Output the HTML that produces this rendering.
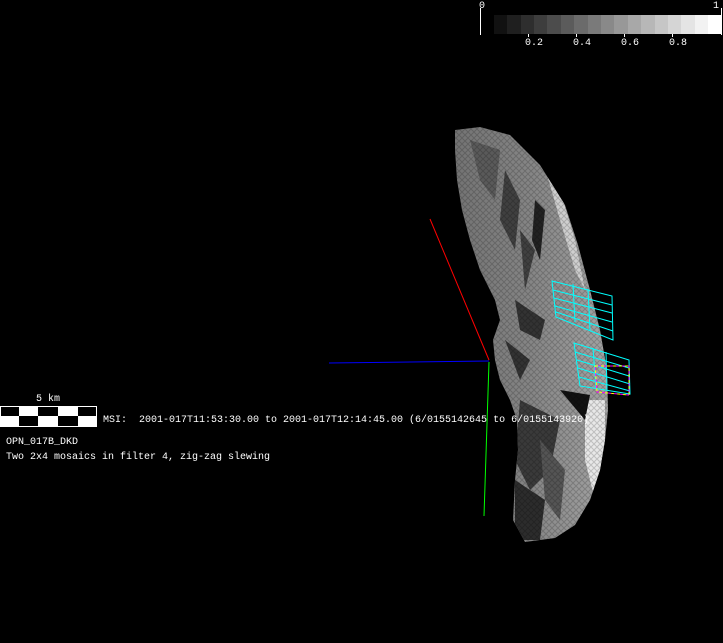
<!DOCTYPE html>
<html><head><style>
html,body{margin:0;padding:0;background:#000;}
body{width:723px;height:643px;overflow:hidden;position:relative;font-family:"Liberation Mono","DejaVu Sans Mono",monospace;font-size:10px;color:#fff;}
.t{position:absolute;white-space:pre;line-height:11px;}
</style></head><body>
<svg width="723" height="643" style="position:absolute;left:0;top:0" xmlns="http://www.w3.org/2000/svg">
<defs>
<linearGradient id="g" x1="0" y1="0" x2="1" y2="0">
<stop offset="0" stop-color="#707070"/><stop offset="0.5" stop-color="#858585"/><stop offset="1" stop-color="#a8a8a8"/>
</linearGradient>
<pattern id="p" width="6" height="6" patternUnits="userSpaceOnUse">
<path d="M0 0L6 6M6 0L0 6" stroke="#000" stroke-opacity="0.18" stroke-width="1"/>
</pattern>
<clipPath id="c"><path id="shape" d="M455 130 L480 127 L510 135 L540 165 L565 205 L578 245 L590 290 L600 330 L607 370 L608 410 L605 440 L600 470 L590 500 L575 525 L555 538 L525 542 L513 520 L515 480 L518 450 L517 420 L510 400 L500 380 L495 360 L493 340 L500 320 L495 300 L480 270 L470 240 L462 210 L457 180 L455 150 Z"/></clipPath>
</defs>
<!-- colorbar -->
<line x1="480.5" y1="8" x2="480.5" y2="35" stroke="#fff"/>
<g>
<rect x="494" y="15" width="14" height="19" fill="#111"/>
<rect x="507" y="15" width="14" height="19" fill="#1f1f1f"/>
<rect x="521" y="15" width="14" height="19" fill="#2e2e2e"/>
<rect x="534" y="15" width="14" height="19" fill="#3d3d3d"/>
<rect x="547" y="15" width="14" height="19" fill="#4c4c4c"/>
<rect x="561" y="15" width="14" height="19" fill="#5b5b5b"/>
<rect x="574" y="15" width="14" height="19" fill="#6b6b6b"/>
<rect x="588" y="15" width="14" height="19" fill="#7a7a7a"/>
<rect x="601" y="15" width="14" height="19" fill="#898989"/>
<rect x="614" y="15" width="14" height="19" fill="#989898"/>
<rect x="628" y="15" width="14" height="19" fill="#a8a8a8"/>
<rect x="641" y="15" width="14" height="19" fill="#b7b7b7"/>
<rect x="655" y="15" width="14" height="19" fill="#c6c6c6"/>
<rect x="668" y="15" width="14" height="19" fill="#d5d5d5"/>
<rect x="681" y="15" width="14" height="19" fill="#e4e4e4"/>
<rect x="695" y="15" width="14" height="19" fill="#f2f2f2"/>
<rect x="708" y="15" width="14" height="19" fill="#fff"/>
</g>
<line x1="721.5" y1="8" x2="721.5" y2="35" stroke="#fff"/>
<g stroke="#fff"><line x1="528.5" y1="34" x2="528.5" y2="37"/><line x1="576.5" y1="34" x2="576.5" y2="37"/><line x1="624.5" y1="34" x2="624.5" y2="37"/><line x1="672.5" y1="34" x2="672.5" y2="37"/></g>
<!-- asteroid -->
<g clip-path="url(#c)">
<rect x="440" y="120" width="180" height="430" fill="url(#g)"/>
<path d="M470 140 L500 150 L495 200 L480 180 Z" fill="#5a5a5a"/>
<path d="M505 170 L520 200 L515 250 L500 220 Z M520 230 L535 250 L525 290 Z" fill="#404040"/>
<path d="M535 200 L545 210 L540 260 L532 240 Z" fill="#222"/>
<path d="M540 150 L560 190 L575 240 L585 290 L575 270 L560 220 Z" fill="#cfcfcf"/>
<path d="M515 300 L545 320 L540 340 L520 330 Z M505 340 L530 360 L520 380 Z" fill="#333"/>
<path d="M520 400 L560 420 L550 470 L530 490 L515 460 Z" fill="#3a3a3a"/>
<path d="M515 480 L545 500 L540 540 L515 540 Z" fill="#2c2c2c"/>
<path d="M540 440 L565 470 L560 520 L545 500 Z" fill="#555"/>
<path d="M585 400 L605 400 L605 470 L595 500 L585 460 Z" fill="#e8e8e8"/>
<path d="M560 390 L590 395 L585 420 Z" fill="#111"/>
<rect x="440" y="120" width="180" height="430" fill="url(#p)"/>
</g>
<!-- axes -->
<line x1="430" y1="219" x2="489" y2="360" stroke="#f00"/>
<line x1="329" y1="363" x2="489" y2="361" stroke="#00f"/>
<line x1="489" y1="362" x2="484" y2="516" stroke="#0f0"/>
<!-- cyan grids -->
<g stroke="#0ff" fill="none" stroke-width="1">
<path d="M552 281 L612 296 L613 340 L556 317 Z"/>
<path d="M553 290 L612 305 M554 298 L612 313 M555 306 L612 322 M556 312 L613 331 M573 284 L575 322 M588 289 L590 330"/>
<path d="M574 343 L629 360 L630 394 L580 386 Z"/>
<path d="M575 352 L629 368 M577 360 L629 376 M578 368 L630 384 M579 377 L630 391 M593 348 L596 388 M606 352 L607 390"/>
</g>
<path d="M595 366 L629 366 L629 395 L597 392 Z" stroke="#ff0" stroke-dasharray="3 3" fill="none"/>
<path d="M595 366 L629 366 L629 395 L597 392 Z" stroke="#f0f" stroke-dasharray="3 3" stroke-dashoffset="3" fill="none"/>
<!-- scale bar -->
<rect x="0.5" y="406.5" width="96" height="20" fill="#fff" stroke="#fff"/>
<g fill="#000">
<rect x="1" y="407" width="18" height="9"/><rect x="38" y="407" width="20" height="9"/><rect x="78" y="407" width="18" height="9"/>
<rect x="19" y="416" width="19" height="10"/><rect x="58" y="416" width="20" height="10"/>
</g>
</svg>
<div class="t" style="left:479px;top:1px">0</div>
<div class="t" style="left:713px;top:1px">1</div>
<div class="t" style="left:525px;top:38px">0.2</div>
<div class="t" style="left:573px;top:38px">0.4</div>
<div class="t" style="left:621px;top:38px">0.6</div>
<div class="t" style="left:669px;top:38px">0.8</div>
<div class="t" style="left:36px;top:394px">5 km</div>
<div class="t" style="left:103px;top:415px">MSI:  2001-017T11:53:30.00 to 2001-017T12:14:45.00 (6/0155142645 to 6/0155143920)</div>
<div class="t" style="left:6px;top:437px">OPN_017B_DKD</div>
<div class="t" style="left:6px;top:452px">Two 2x4 mosaics in filter 4, zig-zag slewing</div>
</body></html>
